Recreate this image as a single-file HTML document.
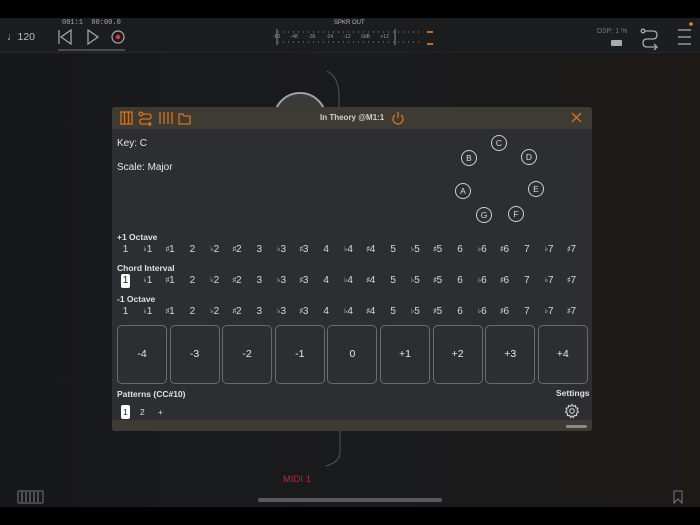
<!DOCTYPE html>
<html><head><meta charset="utf-8"><style>
*{margin:0;padding:0;box-sizing:border-box}
body{width:700px;height:525px;overflow:hidden;background:#000;font-family:"Liberation Sans","DejaVu Sans",sans-serif;position:relative;color:#ddd}
.a{position:absolute}
#bg{left:0;top:18px;width:700px;height:489px;background:linear-gradient(90deg,#17181a 0%,#1a1b1d 50%,#1c1917 100%)}
#tb{left:0;top:18px;width:700px;height:35px;background:#1c1d1f;border-bottom:1px solid #26272a}
#panel{left:112px;top:107px;width:480px;height:324px;background:#2d2e31;border-radius:3px;overflow:hidden}
#hdr{left:0;top:0;width:480px;height:22px;background:#3e3b35}
#ftr{left:0;top:313px;width:480px;height:11px;background:#3e3b35}
.row{position:absolute;left:2.4px;width:468.3px;display:flex;font-size:10px;color:#d8d8d8}
.row span{width:22.3px;text-align:center}
.row i{font-style:normal;font-size:7px;vertical-align:1px}
.lbl{position:absolute;left:5px;font-size:8.5px;font-weight:bold;color:#e0e0e0}
.btn{position:absolute;top:218px;width:50px;height:59px;border:1px solid #6a6b6e;border-radius:5px;font-size:10.5px;color:#e8e8e8;text-align:center;line-height:57px}
.nc{position:absolute;width:16px;height:16px;border:1px solid #cfcfcf;border-radius:50%;font-size:8.5px;text-align:center;line-height:14px;color:#ddd}
.sel{background:#fff;color:#222;border-radius:2px}
</style></head><body>
<div id="bg" class="a"></div>
<svg class="a" style="left:0;top:0" width="700" height="525">
<path d="M327 71 Q339 78 339 95 L339 107" stroke="#55565a" fill="none" stroke-width="1"/>
<path d="M340 431 L340 452 Q340 462 326 466" stroke="#55565a" fill="none" stroke-width="1"/>
<circle cx="300" cy="119" r="26" stroke="#a0a0a0" fill="#3a3a3a" stroke-width="2"/>
<rect x="258" y="498" width="184" height="4" rx="2" fill="#5a5a5c"/>
<rect x="18" y="491" width="25" height="12" rx="1" stroke="#777" fill="none"/>
<g stroke="#888" stroke-width="1"><line x1="22" y1="492" x2="22" y2="502"/><line x1="26" y1="492" x2="26" y2="502"/><line x1="30" y1="492" x2="30" y2="502"/><line x1="34" y1="492" x2="34" y2="502"/><line x1="38" y1="492" x2="38" y2="502"/></g>
<path d="M674 491 L682 491 L682 503 L678 499 L674 503 Z" stroke="#777" fill="none"/>
</svg>
<div class="a" style="left:283px;top:474px;font-size:9.5px;color:#b02a3a">MIDI 1</div>

<div id="tb" class="a"></div>
<div class="a" style="left:7px;top:31px;font-size:10.5px;color:#bbb">♩120</div>
<div class="a" style="left:62px;top:19px;font-size:7px;color:#aaa;font-family:'Liberation Mono',monospace">001:1 &nbsp;00:00.0</div>
<svg class="a" style="left:0;top:18px" width="700" height="35">
<g stroke="#aaa" fill="none" stroke-width="1.2"><line x1="59" y1="12" x2="59" y2="26"/><path d="M71 12 L61 19 L71 26 Z"/><path d="M88 12 L98 19 L88 26 Z"/><circle cx="118" cy="19" r="6"/></g>
<circle cx="118" cy="19" r="2.2" fill="#e33"/>
<line x1="58" y1="32" x2="125" y2="32" stroke="#777"/>
<g stroke="#aaa" stroke-width="0.8"><line x1="278" y1="14" x2="420" y2="14" stroke-dasharray="1 4"/><line x1="278" y1="24" x2="420" y2="24" stroke-dasharray="1 4"/><line x1="277" y1="11" x2="277" y2="27"/><line x1="395" y1="11" x2="395" y2="27"/></g>
<rect x="427" y="13" width="6" height="2" fill="#c86a20"/><rect x="427" y="25" width="6" height="2" fill="#c86a20"/>
<rect x="611" y="22" width="11" height="6" rx="1" fill="#aaa"/>
<g stroke="#aaa" fill="none" stroke-width="1.3"><circle cx="643" cy="13" r="1.8"/><path d="M645 13 L653 13 Q657 13 657 17 Q657 21 653 21 L647 21 Q643 21 643 25 Q643 29 647 29 L657 29 M654 26 L657 29 L654 32"/><line x1="678" y1="12" x2="691" y2="12"/><line x1="678" y1="19" x2="691" y2="19"/><line x1="678" y1="26" x2="691" y2="26"/></g>
<circle cx="691" cy="6" r="1.8" fill="#e08a1a"/>
</svg>
<div class="a" style="left:334px;top:20px;font-size:6px;color:#bbb">SPKR OUT</div>
<div class="a" style="left:273px;top:34px;font-size:5px;color:#999;word-spacing:9px">-60 -48 -36 -24 -12 0dB +12</div>
<div class="a" style="left:597px;top:28px;font-size:7px;color:#777">DSP: 1 %</div>

<div id="panel" class="a">
<div id="hdr" class="a"></div>
<svg class="a" style="left:0;top:0" width="480" height="22">
<g stroke="#d2741f" fill="none" stroke-width="1.3">
<rect x="9" y="5" width="11" height="12"/><line x1="12.5" y1="5" x2="12.5" y2="17"/><line x1="16.5" y1="5" x2="16.5" y2="17"/>
<circle cx="29" cy="7" r="1.8"/><path d="M31 7 L37 7 Q39 7 39 9.5 Q39 12 37 12 L30 12 Q28 12 28 14.5 Q28 17 30 17 L39 17 M37 15 L39 17 L37 19"/>
<line x1="48" y1="5" x2="48" y2="17"/><line x1="52" y1="5" x2="52" y2="17"/><line x1="56" y1="5" x2="56" y2="17"/><line x1="60" y1="5" x2="60" y2="17"/>
<path d="M67 7 L71 7 L72 9 L78 9 L78 17 L67 17 Z"/>
<path d="M283 8 A5 5 0 1 0 289 8"/><line x1="286" y1="5" x2="286" y2="11"/>
<path d="M460 6 L469 15 M469 6 L460 15"/>
</g></svg>
<div class="a" style="left:208px;top:6px;font-size:8px;font-weight:bold;color:#d0d0d0">In Theory @M1:1</div>

<div class="a" style="left:5px;top:31px;font-size:10px;color:#e5e5e5">Key: C</div>
<div class="a" style="left:5px;top:55px;font-size:10px;color:#e5e5e5">Scale: Major</div>
<div class="nc" style="left:379px;top:28px">C</div>
<div class="nc" style="left:349px;top:43px">B</div>
<div class="nc" style="left:409px;top:42px">D</div>
<div class="nc" style="left:343px;top:76px">A</div>
<div class="nc" style="left:416px;top:74px">E</div>
<div class="nc" style="left:364px;top:100px">G</div>
<div class="nc" style="left:396px;top:99px">F</div>

<div class="lbl" style="top:125px">+1 Octave</div>
<div class="row" style="top:137px"><span>1</span><span><i>♭</i>1</span><span><i>♯</i>1</span><span>2</span><span><i>♭</i>2</span><span><i>♯</i>2</span><span>3</span><span><i>♭</i>3</span><span><i>♯</i>3</span><span>4</span><span><i>♭</i>4</span><span><i>♯</i>4</span><span>5</span><span><i>♭</i>5</span><span><i>♯</i>5</span><span>6</span><span><i>♭</i>6</span><span><i>♯</i>6</span><span>7</span><span><i>♭</i>7</span><span><i>♯</i>7</span></div>
<div class="lbl" style="top:156px">Chord Interval</div>
<div class="a sel" style="left:9px;top:167px;width:9px;height:14px"></div>
<div class="row" style="top:168px"><span style="color:#222">1</span><span><i>♭</i>1</span><span><i>♯</i>1</span><span>2</span><span><i>♭</i>2</span><span><i>♯</i>2</span><span>3</span><span><i>♭</i>3</span><span><i>♯</i>3</span><span>4</span><span><i>♭</i>4</span><span><i>♯</i>4</span><span>5</span><span><i>♭</i>5</span><span><i>♯</i>5</span><span>6</span><span><i>♭</i>6</span><span><i>♯</i>6</span><span>7</span><span><i>♭</i>7</span><span><i>♯</i>7</span></div>
<div class="lbl" style="top:187px">-1 Octave</div>
<div class="row" style="top:199px"><span>1</span><span><i>♭</i>1</span><span><i>♯</i>1</span><span>2</span><span><i>♭</i>2</span><span><i>♯</i>2</span><span>3</span><span><i>♭</i>3</span><span><i>♯</i>3</span><span>4</span><span><i>♭</i>4</span><span><i>♯</i>4</span><span>5</span><span><i>♭</i>5</span><span><i>♯</i>5</span><span>6</span><span><i>♭</i>6</span><span><i>♯</i>6</span><span>7</span><span><i>♭</i>7</span><span><i>♯</i>7</span></div>

<div class="btn" style="left:5px">-4</div>
<div class="btn" style="left:57.6px">-3</div>
<div class="btn" style="left:110.2px">-2</div>
<div class="btn" style="left:162.8px">-1</div>
<div class="btn" style="left:215.4px">0</div>
<div class="btn" style="left:268px">+1</div>
<div class="btn" style="left:320.6px">+2</div>
<div class="btn" style="left:373.2px">+3</div>
<div class="btn" style="left:425.8px">+4</div>

<div class="lbl" style="top:282px">Patterns (CC#10)</div>
<div class="lbl" style="top:281px;left:444px">Settings</div>
<div class="a sel" style="left:9px;top:298px;width:9px;height:14px;font-size:8.5px;text-align:center;line-height:14px">1</div>
<div class="a" style="left:28px;top:300px;font-size:8.5px;color:#ddd">2</div>
<div class="a" style="left:46px;top:300px;font-size:8.5px;color:#ddd">+</div>
<svg class="a" style="left:452px;top:296px" width="16" height="16"><g stroke="#ccc" fill="none" stroke-width="1.1"><circle cx="8" cy="8" r="2.3"/><path d="M8 1.5 L9.3 3.4 L11.5 2.5 L11.8 4.8 L14 5.3 L13.1 7.4 L14.5 9 L12.5 10.2 L12.7 12.5 L10.4 12.4 L9.3 14.5 L8 13 L6.7 14.5 L5.6 12.4 L3.3 12.5 L3.5 10.2 L1.5 9 L2.9 7.4 L2 5.3 L4.2 4.8 L4.5 2.5 L6.7 3.4 Z"/></g></svg>
<div id="ftr" class="a"></div>
<div class="a" style="left:454px;top:318px;width:21px;height:3px;border-radius:2px;background:#8a8a8a"></div>
</div>
</body></html>
